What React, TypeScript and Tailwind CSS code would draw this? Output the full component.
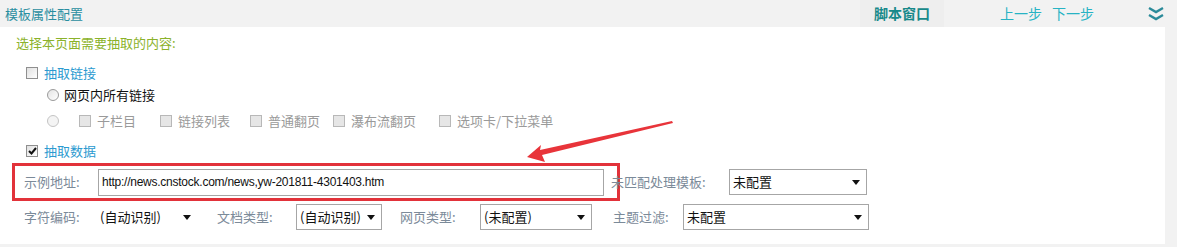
import React from "react";

const font = { fontFamily: '"Noto Sans CJK SC", "Noto Sans", sans-serif' };

function Box({ checked, disabled }: { checked?: boolean; disabled?: boolean }) {
  return (
    <span
      className={`w-[12px] h-[12px] border flex items-center justify-center shrink-0 ${
        disabled ? "border-[#b8b8b8] bg-[#e6e6e6]" : "border-[#8f8f8f] bg-gradient-to-br from-[#e0e0e0] to-white"
      }`}
    >
      {checked && (
        <svg width="9" height="8" viewBox="0 0 9 8">
          <path d="M1 4 L3.5 6.5 L8 1" stroke="#111" strokeWidth="2" fill="none" />
        </svg>
      )}
    </span>
  );
}

function Radio({ disabled }: { disabled?: boolean }) {
  return (
    <span
      className={`w-[12px] h-[12px] rounded-full border shrink-0 ${
        disabled ? "border-[#c4c4c4] bg-[#f4f4f4]" : "border-[#9a9a9a] bg-gradient-to-br from-[#e4e4e4] to-white"
      }`}
    />
  );
}

function Caret() {
  return (
    <svg width="8" height="5" viewBox="0 0 8 5" className="shrink-0">
      <path d="M0 0 H8 L4 5 Z" fill="#111" />
    </svg>
  );
}

function Select({ value, w, bordered = true }: { value: string; w: string; bordered?: boolean }) {
  return (
    <div
      className={`${w} h-[26px] flex items-center justify-between pl-[3px] pr-[6px] text-[13px] text-[#111] ${
        bordered ? "border border-[#a6a6a6]" : ""
      }`}
    >
      <span>{value}</span>
      <Caret />
    </div>
  );
}

const subOptions = ["子栏目", "链接列表", "普通翻页", "瀑布流翻页", "选项卡/下拉菜单"];
const subGaps = ["ml-[20px]", "ml-[24px]", "ml-[20px]", "ml-[13px]", "ml-[23px]"];

export default function App() {
  return (
    <div className="w-[1177px] h-[247px] bg-[#f2f2f2] flex flex-col overflow-hidden relative" style={font}>
      {/* Header */}
      <div className="h-[27px] flex items-center shrink-0">
        <span className="ml-[5px] text-[13px] text-[#2a8ea0]">模板属性配置</span>
        <div className="ml-auto flex items-center h-full">
          <div className="h-full w-[84px] flex items-center justify-center bg-[#eeeeee] mr-[56px]">
            <span className="text-[14px] font-bold text-[#17898a]">脚本窗口</span>
          </div>
          <span className="text-[14px] text-[#27b3c4] mr-[10px]">上一步</span>
          <span className="text-[14px] text-[#27b3c4]">下一步</span>
          <svg width="18" height="16" viewBox="0 0 18 16" className="ml-[53px] mr-[12px]">
            <path d="M2 2 L9 6 L16 2" stroke="#2a8a99" strokeWidth="2.4" fill="none" />
            <path d="M2 9 L9 13 L16 9" stroke="#2a8a99" strokeWidth="2.4" fill="none" />
          </svg>
        </div>
      </div>

      <div className="flex flex-1">
        {/* Body */}
        <div className="w-[1165px] h-[217px] bg-white flex flex-col text-[13px]">
          <div className="h-[20px] mt-[6px] ml-[16px] flex items-center text-[#8bb22a]">选择本页面需要抽取的内容:</div>

          <div className="h-[20px] mt-[10px] ml-[26px] flex items-center gap-[6px]">
            <Box />
            <span className="text-[#2b9ad0]">抽取链接</span>
          </div>

          <div className="h-[20px] mt-[2px] ml-[47px] flex items-center gap-[5px]">
            <Radio />
            <span className="text-[#111]">网页内所有链接</span>
          </div>

          <div className="h-[20px] mt-[6px] ml-[47px] flex items-center text-[#9a9a9a]">
            <Radio disabled />
            {subOptions.map((o, i) => (
              <div key={o} className={`flex items-center gap-[6px] ${subGaps[i]}`}>
                <Box disabled />
                <span>{o}</span>
              </div>
            ))}
          </div>

          <div className="h-[20px] mt-[10px] ml-[26px] flex items-center gap-[6px]">
            <Box checked />
            <span className="text-[#2b9ad0]">抽取数据</span>
          </div>

          <div className="flex items-center h-[38px] mt-[2px]">
            <div className="ml-[12px] w-[608px] h-[38px] border-[3px] border-[#e2323a] flex items-center">
              <span className="ml-[9px] w-[74px] text-[#7b8a99]">示例地址:</span>
              <div
                className="w-[506px] h-[27px] border border-[#a6a6a6] flex items-center pl-[3px] text-[12px] tracking-[-0.25px] text-[#111]"
                style={{ fontFamily: '"Liberation Sans", Arial, sans-serif' }}
              >
                http://news.cnstock.com/news,yw-201811-4301403.htm
              </div>
            </div>
            <span className="ml-[-9px] w-[118px] text-[#7b8a99]">未匹配处理模板:</span>
            <Select value="未配置" w="w-[138px]" />
          </div>

          <div className="flex items-center h-[26px] mt-[3px]">
            <span className="ml-[24px] w-[73px] text-[#7b8a99]">字符编码:</span>
            <Select value="(自动识别)" w="w-[100px]" bordered={false} />
            <span className="ml-[20px] w-[79px] text-[#7b8a99]">文档类型:</span>
            <Select value="(自动识别)" w="w-[86px]" />
            <span className="ml-[18px] w-[80px] text-[#7b8a99]">网页类型:</span>
            <Select value="(未配置)" w="w-[112px]" />
            <span className="ml-[21px] w-[70px] text-[#7b8a99]">主题过滤:</span>
            <Select value="未配置" w="w-[186px]" />
          </div>
        </div>
      </div>

      {/* Red annotation arrow */}
      <svg className="absolute left-0 top-0 pointer-events-none" width="1177" height="247">
        <polygon
          points="527,157 541,145 540,150 672,121 673,123 542,155 545,162"
          fill="#e8343a"
        />
      </svg>
    </div>
  );
}
